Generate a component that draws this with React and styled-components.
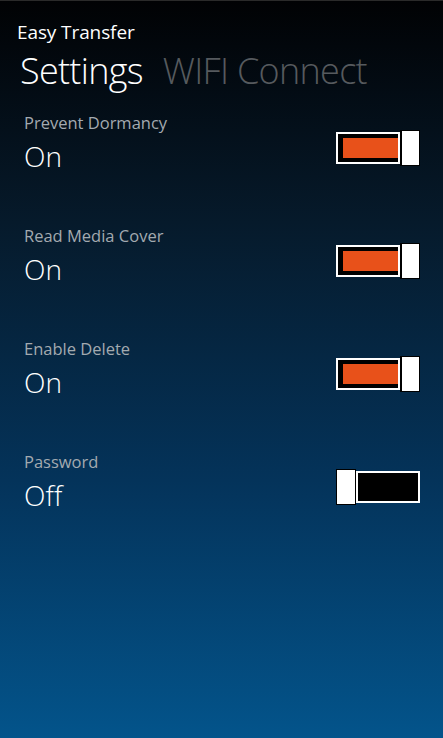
import React from "react";
import styled, { createGlobalStyle } from "styled-components";

const Global = createGlobalStyle`
  html, body { margin: 0; padding: 0; }
  body { background: #000; }
  * { box-sizing: border-box; }
`;

const Page = styled.div`
  width: 443px;
  height: 738px;
  overflow: hidden;
  background: linear-gradient(to bottom, #010204 0%, #061a2b 30%, #04335a 65%, #03548b 100%);
  border-top: 1px solid #2a2a2a;
  font-family: "Open Sans", "Noto Sans", sans-serif;
  color: #fff;
  display: flex;
  flex-direction: column;
`;

const AppTitle = styled.div`
  font-size: 19px;
  line-height: 24px;
  padding: 19px 0 0 17px;
  letter-spacing: -0.1px;
`;

const Pivot = styled.div`
  display: flex;
  gap: 20px;
  padding: 5px 0 0 20px;
  height: 52px;
`;

const PivotItem = styled.div`
  font-size: 36px;
  line-height: 44px;
  font-weight: 300;
  letter-spacing: -0.7px;
  color: ${(p) => (p.$active ? "#ffffff" : "#565a5e")};
`;

const List = styled.div`
  display: flex;
  flex-direction: column;
  padding: 16px 23px 0 24px;
`;

const Row = styled.div`
  height: 113px;
  display: grid;
  grid-template-columns: 1fr auto;
  grid-template-rows: auto auto;
  align-content: start;
  align-items: start;
`;

const Label = styled.div`
  grid-column: 1 / 3;
  font-size: 16.5px;
  line-height: 22px;
  color: #a3aab0;
`;

const Value = styled.div`
  font-size: 28px;
  line-height: 36px;
  font-weight: 300;
  margin-top: 4px;
  color: #fff;
`;

const Switch = styled.div`
  width: 84px;
  height: 36px;
  display: flex;
  align-items: center;
  flex-direction: ${(p) => (p.$on ? "row" : "row-reverse")};
  margin-top: -4px;
`;

const Track = styled.div`
  height: 32px;
  flex: 1;
  border: 2px solid #fff;
  background: #000;
  padding: ${(p) => (p.$on ? "4px 0 4px 5px" : "0")};
`;

const Fill = styled.div`
  width: 100%;
  height: 100%;
  background: #e8511a;
`;

const Thumb = styled.div`
  width: 20px;
  height: 36px;
  background: #fff;
  border: 1px solid #000;
  border-left-width: ${(p) => (p.$on ? "2px" : "1px")};
`;

const Toggle = ({ on }) => (
  <Switch $on={on}>
    <Track $on={on}>{on && <Fill />}</Track>
    <Thumb $on={on} />
  </Switch>
);

const settings = [
  { label: "Prevent Dormancy", on: true },
  { label: "Read Media Cover", on: true },
  { label: "Enable Delete", on: true },
  { label: "Password", on: false },
];

export default function App() {
  return (
    <>
      <Global />
      <Page>
        <AppTitle>Easy Transfer</AppTitle>
        <Pivot>
          <PivotItem $active>Settings</PivotItem>
          <PivotItem>WIFI Connect</PivotItem>
        </Pivot>
        <List>
          {settings.map((s) => (
            <Row key={s.label}>
              <Label>{s.label}</Label>
              <Value>{s.on ? "On" : "Off"}</Value>
              <Toggle on={s.on} />
            </Row>
          ))}
        </List>
      </Page>
    </>
  );
}
